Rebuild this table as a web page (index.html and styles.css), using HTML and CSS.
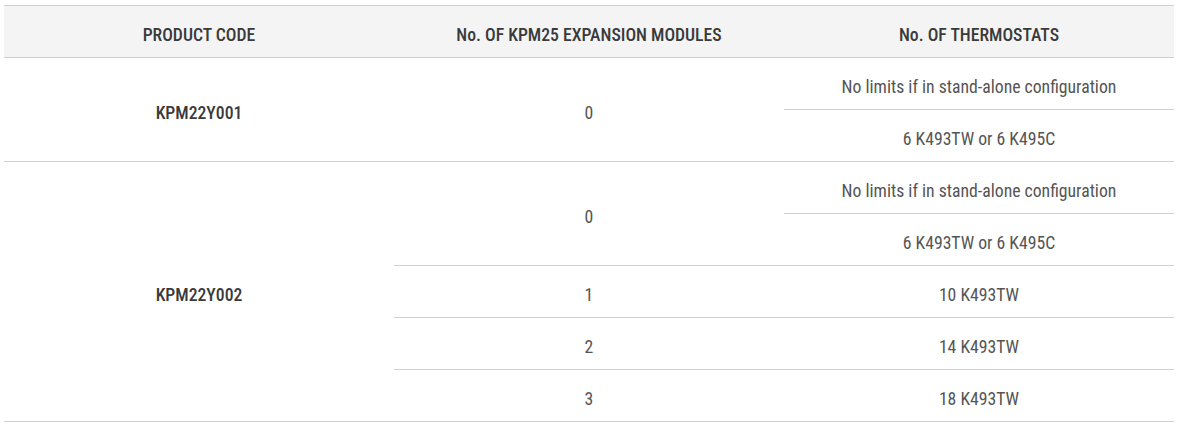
FILE: index.html
```html
<!DOCTYPE html>
<html>
<head>
<meta charset="utf-8">
<link rel="stylesheet" href="styles.css">
</head>
<body>
<table class="spec">
  <thead>
    <tr>
      <th class="col">PRODUCT CODE</th>
      <th class="col">No. OF KPM25 EXPANSION MODULES</th>
      <th class="col">No. OF THERMOSTATS</th>
    </tr>
  </thead>
  <tbody>
    <tr>
      <td class="code group-end" rowspan="2">KPM22Y001</td>
      <td class="group-end" rowspan="2">0</td>
      <td>No limits if in stand-alone configuration</td>
    </tr>
    <tr>
      <td class="group-end">6 K493TW or 6 K495C</td>
    </tr>
    <tr>
      <td class="code group-end" rowspan="5">KPM22Y002</td>
      <td rowspan="2">0</td>
      <td>No limits if in stand-alone configuration</td>
    </tr>
    <tr>
      <td>6 K493TW or 6 K495C</td>
    </tr>
    <tr>
      <td>1</td>
      <td>10 K493TW</td>
    </tr>
    <tr>
      <td>2</td>
      <td>14 K493TW</td>
    </tr>
    <tr>
      <td class="group-end">3</td>
      <td class="group-end">18 K493TW</td>
    </tr>
  </tbody>
</table>
</body>
</html>
```
FILE: styles.css
```css
html, body {
  margin: 0;
  padding: 0;
  background: #fff;
}
body {
  padding: 5px 4px 0 4px;
  font-family: "Roboto Condensed", Roboto, "Liberation Sans", sans-serif;
}
.spec {
  width: 1170px;
  border-collapse: collapse;
  table-layout: fixed;
}
.spec th,
.spec td {
  height: 52px;
  box-sizing: border-box;
  padding: 6px 0 0 0;
  text-align: center;
  vertical-align: middle;
  border-bottom: 1px solid #cfcfcf;
  font-size: 17.7px;
  line-height: 20px;
}
.spec th {
  background: #f4f4f4;
  border-top: 1px solid #cfcfcf;
  color: #3a3a3a;
  font-weight: 500;
}
.spec th.col {
  width: 33.33%;
}
.spec td {
  color: #555;
  font-weight: 400;
}
.spec td.code {
  color: #3a3a3a;
  font-weight: 500;
}
```
